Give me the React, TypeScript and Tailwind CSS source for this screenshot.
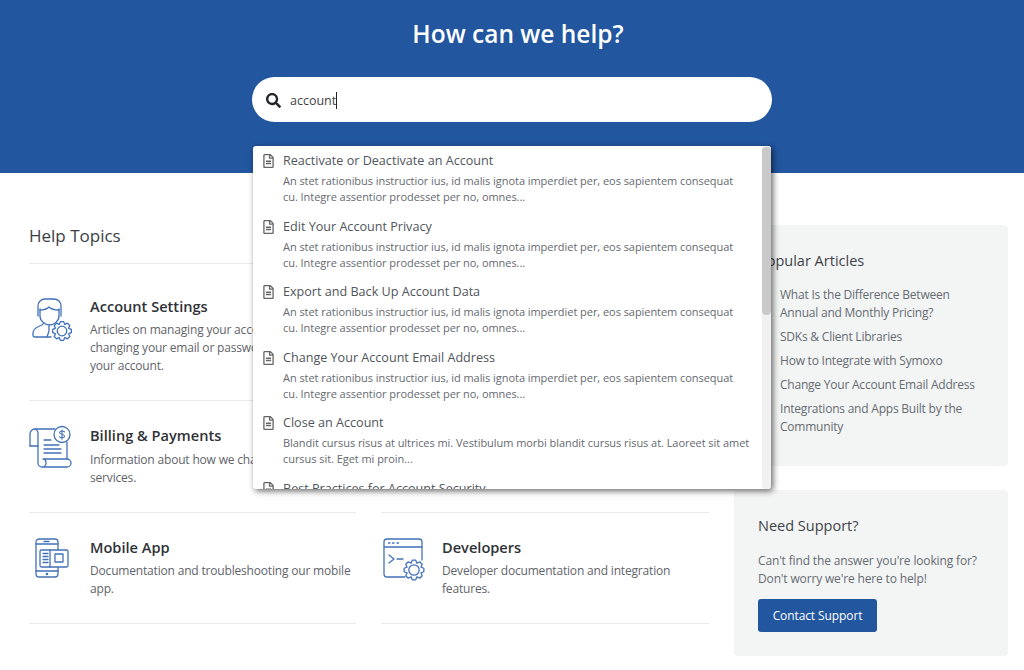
import React from "react";
import { FaSearch, FaRegFileAlt } from "react-icons/fa";

const font = { fontFamily: '"Open Sans", "Noto Sans", sans-serif' };

const latin =
  "An stet rationibus instructior ius, id malis ignota imperdiet per, eos sapientem consequat";
const latin2 = "cu. Integre assentior prodesset per no, omnes...";

const results = [
  { title: "Reactivate or Deactivate an Account", l1: latin, l2: latin2 },
  { title: "Edit Your Account Privacy", l1: latin, l2: latin2 },
  { title: "Export and Back Up Account Data", l1: latin, l2: latin2 },
  { title: "Change Your Account Email Address", l1: latin, l2: latin2 },
  {
    title: "Close an Account",
    l1: "Blandit cursus risus at ultrices mi. Vestibulum morbi blandit cursus risus at. Laoreet sit amet",
    l2: "cursus sit. Eget mi proin...",
  },
  { title: "Best Practices for Account Security", l1: latin, l2: latin2 },
];

const popular = [
  ["What Is the Difference Between", "Annual and Monthly Pricing?"],
  ["SDKs & Client Libraries"],
  ["How to Integrate with Symoxo"],
  ["Change Your Account Email Address"],
  ["Integrations and Apps Built by the", "Community"],
];

// gear outline used by two of the topic icons
const gearPath = (cx: number, cy: number, r: number) => {
  const teeth = 8;
  const pts: string[] = [];
  for (let i = 0; i < teeth; i++) {
    const a = (i / teeth) * Math.PI * 2;
    const step = Math.PI / teeth;
    [
      [a - step * 0.95, r * 0.76],
      [a - step * 0.45, r],
      [a + step * 0.45, r],
      [a + step * 0.95, r * 0.76],
    ].forEach(([t, d]) => {
      pts.push(`${(cx + Math.cos(t) * d).toFixed(2)} ${(cy + Math.sin(t) * d).toFixed(2)}`);
    });
  }
  return "M" + pts.join("L") + "Z";
};

const IconBox = ({ children }: { children: React.ReactNode }) => (
  <svg
    viewBox="0 0 44 44"
    className="w-[44px] h-[44px] shrink-0 overflow-visible"
    fill="none"
    stroke="#4272b8"
    strokeWidth="1.3"
    strokeLinecap="round"
    strokeLinejoin="round"
  >
    {children}
  </svg>
);

const AccountIcon = () => (
  <IconBox>
    <path d="M9 19V9a7 7 0 0 1 7-7h9a7 7 0 0 1 7 7v10" />
    <path d="M11 13c4 0 7-1 9-3c2 2 6 3 10 3" />
    <path d="M11 12v7c0 5 5 9 9.500 9s9.500-4 9.500-9v-7" />
    <path d="M15 26c-2 4-11 3-11 10v2a2 2 0 0 0 2 2h16" />
    <path d="M20 29v5M18 40l2-6" />
    <path d={gearPath(33, 34, 9.500)} fill="#fff" />
    <circle cx="33" cy="34" r="4.800" />
  </IconBox>
);

const BillingIcon = () => (
  <IconBox>
    <path d="M1 20V8a5 5 0 0 1 5-5h20" />
    <path d="M1 20h8V8a5 5 0 0 0-3-5" />
    <path d="M9 20v17a4 4 0 0 0 8 0c0-2-1-4-3-4h24a4 4 0 0 1 0 8H13" />
    <path d="M38 16v17" />
    <path d="M15 14h7M15 19h15M15 23h17M15 27h17" />
    <circle cx="33" cy="8.500" r="8" fill="#fff" />
    <path d="M35.500 5.800c-1-1.200-5-1.200-5 .8c0 2.400 5 1 5 3.600c0 2-4 2-5 .6M33 3.800v9.500" strokeWidth="1.100" />
  </IconBox>
);

const MobileIcon = () => (
  <IconBox>
    <rect x="7" y="1" width="22" height="38" rx="3" />
    <path d="M7 6h22M7 33h22M15 3.500h5" />
    <circle cx="18" cy="36" r="0.700" />
    <rect x="11" y="12" width="28" height="17" rx="1.500" fill="#fff" />
    <path d="M21 12v17" />
    <rect x="26" y="16" width="8" height="8" />
    <path d="M14 15.500h5M14 18.500h5M14 21.500h5M14 24.500h5" />
  </IconBox>
);

const DevIcon = () => (
  <IconBox>
    <path d="M24 39H6a3 3 0 0 1-3-3V4a3 3 0 0 1 3-3h32a3 3 0 0 1 3 3v18" />
    <path d="M3 9h38" />
    <path d="M7.500 5h1.500M11.500 5h1.500M16 5h1.500" />
    <path d="M8 17l5 4l-5 4M16 21h6" />
    <path d={gearPath(33, 32, 10)} fill="#fff" />
    <circle cx="33" cy="32" r="5.200" />
  </IconBox>
);

const Topic = ({
  icon,
  title,
  lines,
  first,
}: {
  icon: React.ReactNode;
  title: string;
  lines: string[];
  first?: boolean;
}) => (
  <div className={`flex border-b border-[#e8eaea] ${first ? "pt-[32px] pb-[25.500px]" : "pt-[24px] pb-[25px]"}`}>
    <div className={`w-[61px] shrink-0 ${first ? "pt-[1px]" : "pt-[1px]"}`}>{icon}</div>
    <div>
      <h3 className={`text-[14.600px] leading-[20px] font-semibold text-[#2f3237] ${first ? "mb-[4.500px]" : "mb-[5.500px]"}`}>
        {title}
      </h3>
      {lines.map((l) => (
        <p key={l} className="text-[12px] leading-[18px] tracking-[-0.18px] text-[#5f646a] whitespace-nowrap">
          {l}
        </p>
      ))}
    </div>
  </div>
);

export default function App() {
  return (
    <div className="relative h-[670px] overflow-hidden bg-white" style={font}>
      <header className="h-[173px] bg-[#22569f] flex flex-col items-center">
        <h1 className="mt-[16px] ml-[12px] text-[24.500px] leading-[36px] font-semibold text-white">How can we help?</h1>
        <div className="mt-[25px] w-[520px] h-[45px] bg-white rounded-full flex items-center pl-[14px] pt-[1px] gap-[9px]">
          <FaSearch className="text-[#23272b] w-[15px] h-[15px]" />
          <span className="text-[12.500px] text-[#3f4348] border-r border-[#222] leading-[17px]">account</span>
        </div>
      </header>

      {/* search results dropdown */}
      <div className="absolute left-[253px] top-[146px] w-[518px] h-[343px] bg-white rounded-[3px] overflow-hidden shadow-[2px_2px_6px_rgba(0,0,0,0.6)] z-10">
        <div className="flex flex-col">
          {results.map((r) => (
            <div key={r.title} className="flex h-[65.600px] shrink-0 pl-[10px] pt-[6px]">
              <FaRegFileAlt className="w-[11px] h-[14px] mt-[2px] text-[#666] shrink-0" />
              <div className="ml-[9px]">
                <div className="text-[12.600px] leading-[18px] font-medium text-[#50555b]">{r.title}</div>
                <div className="mt-[3px] text-[11px] leading-[16px] tracking-[-0.05px] text-[#666a70] whitespace-nowrap">
                  <div>{r.l1}</div>
                  <div>{r.l2}</div>
                </div>
              </div>
            </div>
          ))}
        </div>
        <div className="absolute right-0 top-0 bottom-0 w-[9px] bg-[#f1f1f1] rounded-[3px]">
          <div className="h-[168px] mt-[1px] bg-[#c9c9c9] rounded-[4px]"></div>
        </div>
      </div>

      <main className="flex pl-[29px] pr-[16px] gap-[25px] mt-[52px]">
        <section className="w-[680px] shrink-0">
          <h2 className="text-[17px] leading-[22px] font-normal text-[#3a3e44] pb-[16px] border-b border-[#e8eaea]">
            Help Topics
          </h2>
          <div className="grid grid-cols-[327px_328px] gap-x-[25px]">
            <Topic
              first
              icon={<AccountIcon />}
              title="Account Settings"
              lines={["Articles on managing your account", "changing your email or password", "your account."]}
            />
            <div className="border-b border-[#e8eaea]"></div>
            <Topic
              icon={<BillingIcon />}
              title="Billing & Payments"
              lines={["Information about how we charge", "services."]}
            />
            <div className="border-b border-[#e8eaea]"></div>
            <Topic
              icon={<MobileIcon />}
              title="Mobile App"
              lines={["Documentation and troubleshooting our mobile", "app."]}
            />
            <Topic
              icon={<DevIcon />}
              title="Developers"
              lines={["Developer documentation and integration", "features."]}
            />
          </div>
        </section>

        <aside className="w-[274px] shrink-0 flex flex-col gap-[24px]">
          <div className="h-[241px] bg-[#f3f5f5] rounded-[4px] pl-[24px] pt-[24px]">
            <h2 className="text-[14.500px] leading-[24px] font-medium text-[#3f4348]">Popular Articles</h2>
            <ul className="mt-[13px] ml-[22px] flex flex-col gap-[6px]">
              {popular.map((p) => (
                <li key={p[0]} className="text-[12px] leading-[18px] tracking-[-0.22px] text-[#666b71] whitespace-nowrap">
                  {p.map((l) => (
                    <div key={l}>{l}</div>
                  ))}
                </li>
              ))}
            </ul>
          </div>
          <div className="h-[166px] bg-[#f3f5f5] rounded-[4px] pl-[24px] pt-[24px]">
            <h2 className="text-[14.500px] leading-[24px] font-medium text-[#3f4348]">Need Support?</h2>
            <p className="mt-[14px] text-[12px] leading-[18px] tracking-[-0.15px] text-[#666b71] whitespace-nowrap">
              Can't find the answer you're looking for?
              <br />
              Don't worry we're here to help!
            </p>
            <button className="mt-[11px] w-[119px] h-[33px] bg-[#22569f] rounded-[3px] text-white text-[12px] tracking-[-0.1px]">
              Contact Support
            </button>
          </div>
        </aside>
      </main>
    </div>
  );
}
